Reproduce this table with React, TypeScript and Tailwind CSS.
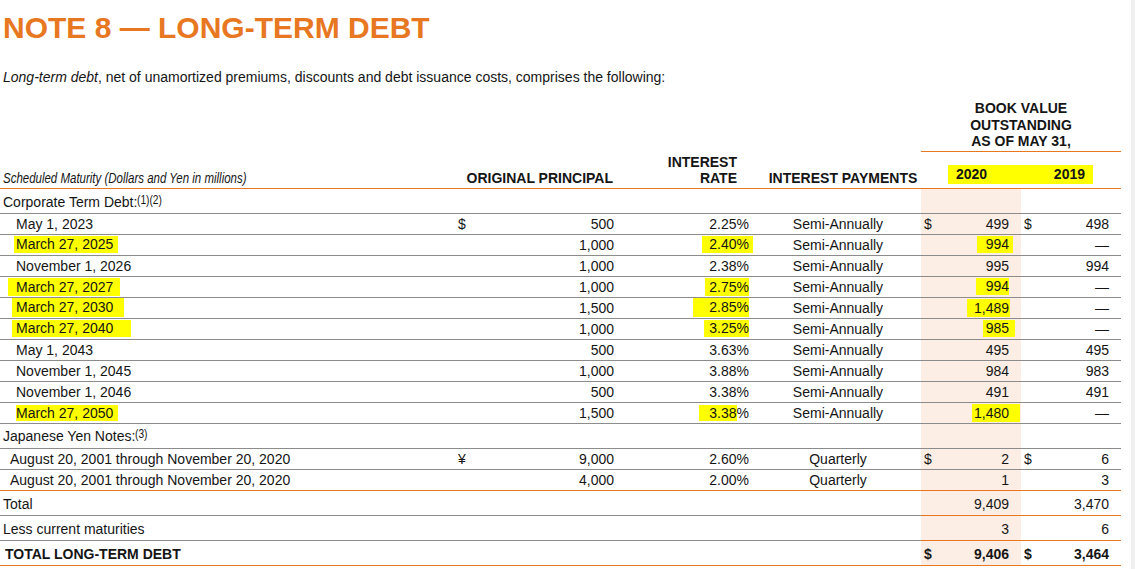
import React from 'react';

type DebtRow = {
  label: string;
  labelHl?: string;
  cur?: string;
  principal: string;
  rate: string;
  rateHl?: string;
  rateTail?: string;
  pay: string;
  d20?: string;
  v20: string;
  v20Hl?: string;
  d19?: string;
  v19: string;
};

const corporate: DebtRow[] = [
  { label: 'May 1, 2023', cur: '$', principal: '500', rate: '2.25%', pay: 'Semi-Annually', d20: '$', v20: '499', d19: '$', v19: '498' },
  { label: 'March 27, 2025', labelHl: '-ml-[2px] pl-[2px] pr-[5px] leading-[17px]', principal: '1,000', rate: '2.40%', rateHl: 'pl-[7px] pr-[4px] -mr-[4px] leading-[17px]', pay: 'Semi-Annually', v20: '994', v20Hl: 'pl-[9px] pr-[4px] -mr-[4px] leading-[17px]', v19: '—' },
  { label: 'November 1, 2026', principal: '1,000', rate: '2.38%', pay: 'Semi-Annually', v20: '995', v19: '994' },
  { label: 'March 27, 2027', labelHl: '-ml-[8px] pl-[8px] pr-[7px] leading-[18px]', principal: '1,000', rate: '2.75%', rateHl: 'pl-[4px] leading-[18px]', pay: 'Semi-Annually', v20: '994', v20Hl: 'pl-[10px] leading-[17px]', v19: '—' },
  { label: 'March 27, 2030', labelHl: '-ml-[4px] pl-[4px] pr-[11px] leading-[19px]', principal: '1,500', rate: '2.85%', rateHl: 'pl-[16px] leading-[19px]', pay: 'Semi-Annually', v20: '1,489', v20Hl: 'pl-[7px] pr-[1px] -mr-[1px] leading-[18px]', v19: '—' },
  { label: 'March 27, 2040', labelHl: '-ml-[4px] pl-[4px] pr-[18px] leading-[17px]', principal: '1,000', rate: '3.25%', rateHl: 'pl-[5px] leading-[17px]', pay: 'Semi-Annually', v20: '985', v20Hl: 'pl-[3px] pr-[6px] -mr-[6px] leading-[17px]', v19: '—' },
  { label: 'May 1, 2043', principal: '500', rate: '3.63%', pay: 'Semi-Annually', v20: '495', v19: '495' },
  { label: 'November 1, 2045', principal: '1,000', rate: '3.88%', pay: 'Semi-Annually', v20: '984', v19: '983' },
  { label: 'November 1, 2046', principal: '500', rate: '3.38%', pay: 'Semi-Annually', v20: '491', v19: '491' },
  { label: 'March 27, 2050', labelHl: 'pr-[5px] leading-[16px]', principal: '1,500', rate: '3.38', rateHl: 'pl-[10px] leading-[16px]', rateTail: '%', pay: 'Semi-Annually', v20: '1,480', v20Hl: 'pl-[2px] pr-[11px] -mr-[11px] leading-[18px]', v19: '—' },
];

const yen: DebtRow[] = [
  { label: 'August 20, 2001 through November 20, 2020', cur: '¥', principal: '9,000', rate: '2.60%', pay: 'Quarterly', d20: '$', v20: '2', d19: '$', v19: '6' },
  { label: 'August 20, 2001 through November 20, 2020', principal: '4,000', rate: '2.00%', pay: 'Quarterly', v20: '1', v19: '3' },
];

const GRID = 'grid grid-cols-[452px_68px_100px_135px_166px_100px_100px]';
const GRAY = 'border-b border-[#8c8c8c]';
const ORANGE = 'border-b border-[#e87722]';

function Hl({ cls, children }: { cls?: string; children: React.ReactNode }) {
  if (!cls) return <>{children}</>;
  return <span className={`inline-block bg-[#ffff00] ${cls}`}>{children}</span>;
}

function DataRow({ row, last, indent }: { row: DebtRow; last?: boolean; indent: string }) {
  const b = last ? ORANGE : GRAY;
  return (
    <div className={GRID}>
      <div className={`h-[21px] flex items-center ${indent} ${b}`}>
        <Hl cls={row.labelHl}>{row.label}</Hl>
      </div>
      <div className={`h-[21px] flex items-center pl-[6px] ${b}`}>{row.cur}</div>
      <div className={`h-[21px] flex items-center justify-end pr-[6px] ${b}`}>{row.principal}</div>
      <div className={`h-[21px] flex items-center justify-end pr-[6px] ${b}`}>
        <Hl cls={row.rateHl}>{row.rate}</Hl>
        {row.rateTail}
      </div>
      <div className={`h-[21px] flex items-center justify-center ${b}`}>{row.pay}</div>
      <div className={`h-[21px] flex items-center justify-between pl-[3px] pr-[12px] bg-[#fdeee5] ${b}`}>
        <span>{row.d20}</span>
        <Hl cls={row.v20Hl}>{row.v20}</Hl>
      </div>
      <div className={`h-[21px] flex items-center justify-between pl-[3px] pr-[12px] ${b}`}>
        <span>{row.d19}</span>
        <span>{row.v19}</span>
      </div>
    </div>
  );
}

function SectionRow({ label, sup, pt }: { label: string; sup: string; pt: string }) {
  return (
    <div className={GRID}>
      <div className={`col-span-5 h-[25px] flex items-center pl-[3px] ${pt} ${GRAY}`}>
        {label}
        <span className="inline-block text-[12px] leading-[14px] -translate-y-[2px] origin-left scale-x-[0.85]">{sup}</span>
      </div>
      <div className={`h-[25px] bg-[#fdeee5] ${GRAY}`} />
      <div className={`h-[25px] ${GRAY}`} />
    </div>
  );
}

function SumRow({ label, v20, v19, bold, leftBorder, pt, pl, d }: { label: string; v20: string; v19: string; bold?: boolean; leftBorder: string; pt: string; pl: string; d?: boolean }) {
  return (
    <div className={`${GRID} ${bold ? 'font-bold' : ''}`}>
      <div className={`col-span-5 h-[25px] flex items-center ${pl} ${pt} ${leftBorder}`}>{label}</div>
      <div className={`h-[25px] flex items-center justify-between pl-[3px] pr-[12px] bg-[#fdeee5] ${pt} ${ORANGE}`}>
        <span>{d ? '$' : ''}</span>
        <span>{v20}</span>
      </div>
      <div className={`h-[25px] flex items-center justify-between pl-[3px] pr-[12px] ${pt} ${ORANGE}`}>
        <span>{d ? '$' : ''}</span>
        <span>{v19}</span>
      </div>
    </div>
  );
}

export default function App() {
  return (
    <div className="flex min-h-screen bg-white text-[#151515] font-['Liberation_Sans',Arial,sans-serif]">
      <div className="flex-1">
        <h1 className="pt-[10px] pl-[3px] text-[30px] leading-[36px] font-bold text-[#e87722]">
          NOTE 8 — LONG-TERM DEBT
        </h1>
        <p className="mt-[23px] pl-[3px] text-[14px] leading-[16px]">
          <em>Long-term debt</em>, net of unamortized premiums, discounts and debt issuance costs, comprises the following:
        </p>

        <div className="w-[1121px] mt-[15px]">
          {/* Book value group header */}
          <div className="flex justify-end">
            <div className="w-[200px] pb-[1px] border-b border-[#e87722] text-center text-[14px] leading-[16.5px] font-bold">
              BOOK VALUE
              <br />
              OUTSTANDING
              <br />
              AS OF MAY 31,
            </div>
          </div>

          {/* Column headers */}
          <div className={`${GRID} h-[37px] ${ORANGE} text-[14px] leading-[16px]`}>
            <div className="flex flex-col justify-end pb-[2px] pl-[3px] font-normal italic">
              <span className="inline-block origin-left scale-x-[0.82] whitespace-nowrap">
                Scheduled Maturity (Dollars and Yen in millions)
              </span>
            </div>
            <div className="col-span-2 flex flex-col justify-end items-end pb-[2px] pr-[7px] font-bold">
              ORIGINAL PRINCIPAL
            </div>
            <div className="flex flex-col justify-end items-end pb-[2px] pr-[18px] font-bold text-right">
              <span>INTEREST</span>
              <span>RATE</span>
            </div>
            <div className="flex flex-col justify-end items-center pb-[2px] pl-[10px] font-bold">
              INTEREST PAYMENTS
            </div>
            <div className="col-span-2 flex flex-col justify-end pb-[4px] pl-[27px] pr-[28px] font-bold">
              <div className="h-[19px] flex items-center justify-between px-[8px] bg-[#ffff00]">
                <span>2020</span>
                <span>2019</span>
              </div>
            </div>
          </div>

          <div className="text-[14px] leading-[16px]">
            <SectionRow label="Corporate Term Debt:" sup="(1)(2)" pt="pt-[2px]" />
            {corporate.map((r, i) => (
              <DataRow key={i} row={r} indent="pl-[16px]" />
            ))}
            <SectionRow label="Japanese Yen Notes:" sup="(3)" pt="pt-[1px]" />
            {yen.map((r, i) => (
              <DataRow key={i} row={r} indent="pl-[10px]" last={i === yen.length - 1} />
            ))}
            <SumRow label="Total" v20="9,409" v19="3,470" leftBorder={GRAY} pt="pt-[2px]" pl="pl-[3px]" />
            <SumRow label="Less current maturities" v20="3" v19="6" leftBorder={GRAY} pt="pt-[2px]" pl="pl-[3px]" />
            <SumRow label="TOTAL LONG-TERM DEBT" v20="9,406" v19="3,464" bold d leftBorder={ORANGE} pt="pt-[2px]" pl="pl-[5px]" />
          </div>
        </div>
      </div>
      <div className="w-[4px] bg-[#f0f0f0]" />
    </div>
  );
}
